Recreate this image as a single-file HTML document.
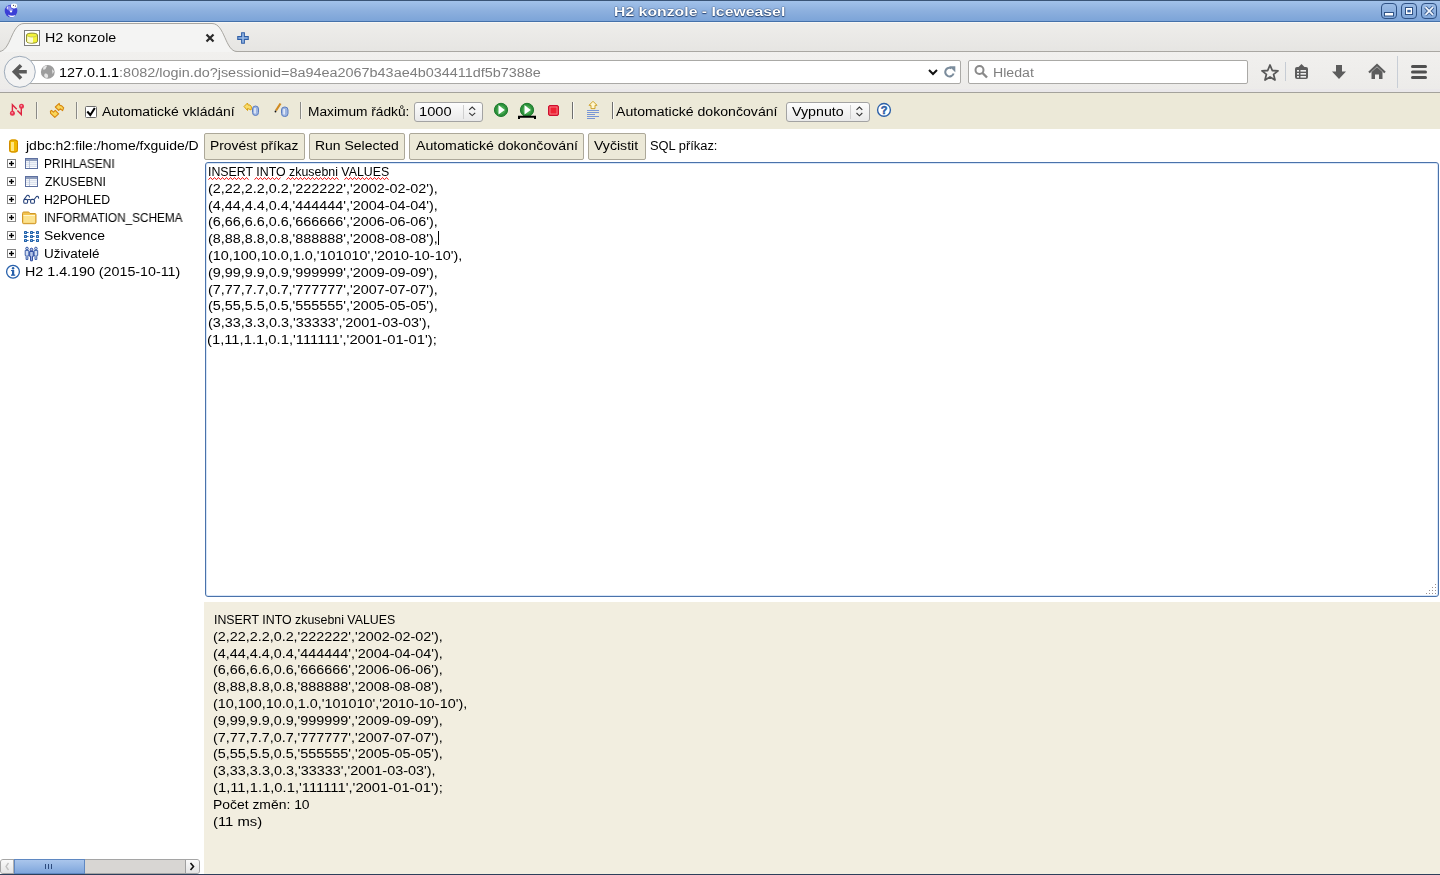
<!DOCTYPE html>
<html><head><meta charset="utf-8"><title>H2 konzole</title>
<style>
*{box-sizing:border-box}
html,body{margin:0;padding:0;width:1440px;height:875px;overflow:hidden;background:#fff;font-family:'Liberation Sans', sans-serif}
.a{position:absolute}
.t{position:absolute;white-space:pre;line-height:20px;transform-origin:0 0;font-family:'Liberation Sans', sans-serif;will-change:transform}
svg{position:absolute;overflow:visible}
</style></head><body>
<!-- TITLE BAR -->
<div class="a" style="left:0;top:0;width:1440px;height:22px;background:linear-gradient(#a2c2ea,#8db0de 50%,#7ca4d8);border-top:1px solid #3a5476;border-bottom:1px solid #4571aa"></div>
<svg style="left:0;top:0" width="24" height="22">
<circle cx="11" cy="11" r="6.3" fill="#3b3fd6"/>
<path d="M7 7 L9.5 5.5 L11 8 L13 9.5 L12 12 L9 11 Z" fill="#8f8ff0"/>
<ellipse cx="14" cy="6" rx="3.2" ry="2.4" fill="#fff"/>
<circle cx="13.5" cy="5.3" r="0.6" fill="#333"/><circle cx="15.5" cy="6" r="0.6" fill="#333"/>
<path d="M6.5 8 L8 6 L7.5 10 Z" fill="#fff"/>
<path d="M8 14.5 C10 16, 13 16, 15.5 15 L14 16.8 C11 17.5, 9 17, 8 14.5Z" fill="#fff"/>
<circle cx="11" cy="11.5" r="1.1" fill="#fff"/>
</svg>
<div class="t" style="left:613.78px;top:2px;font-size:13px;font-weight:bold;color:#fff;transform:scaleX(1.2158);text-shadow:0 0 1px #1d3a66,0 0 1px #1d3a66,0 1px 1px #2b4a7a;">H2 konzole - Iceweasel</div>
<svg style="left:1380px;top:2px" width="60" height="19">
<g fill="none" stroke="#2f5285" stroke-width="1">
<rect x="1.5" y="1.5" width="15" height="15" rx="3.5"/>
<rect x="21.5" y="1.5" width="15" height="15" rx="3.5"/>
<rect x="41.5" y="1.5" width="15" height="15" rx="3.5"/>
</g>
<rect x="4.5" y="10.5" width="9" height="3.5" fill="#fff" stroke="#2f5285" stroke-width="1"/>
<rect x="25.5" y="5.5" width="7" height="7" fill="#fff" stroke="#2f5285" stroke-width="1"/>
<rect x="27.3" y="7.8" width="3.4" height="2.6" fill="#3a64a0"/>
<path d="M45.5 5.2 L53 12.8 M53 5.2 L45.5 12.8" stroke="#2f5285" stroke-width="3.4"/>
<path d="M45.5 5.2 L53 12.8 M53 5.2 L45.5 12.8" stroke="#eef3fb" stroke-width="1.9"/>
</svg>
<!-- TAB STRIP -->
<div class="a" style="left:0;top:22px;width:1440px;height:30px;background:linear-gradient(#eeedeb,#e6e5e2);border-top:1px solid #f7f6f4"></div>
<div class="a" style="left:0;top:51px;width:1440px;height:1px;background:#a9a7a2"></div>
<svg style="left:0;top:0" width="260" height="60">
<path d="M-1 51.5 C 11 51.5, 11 23.5, 24 23.5 L 212 23.5 C 225 23.5, 225 51.5, 237 51.5 L 237 53 L -1 53 Z" fill="#f4f4f3"/>
<path d="M-1 51.5 C 11 51.5, 11 23.5, 24 23.5 L 212 23.5 C 225 23.5, 225 51.5, 237 51.5" fill="none" stroke="#a8a6a1" stroke-width="1"/>
<rect x="24.5" y="30.5" width="15" height="15" fill="#fff" stroke="#7e7e7e"/>
<path d="M26.5 35 C26.5 32.5, 37.5 32.5, 37.5 35 V41.3 C37.5 43.8, 26.5 43.8, 26.5 41.3 Z" fill="#f3f33a" stroke="#8f8f32"/>
<path d="M27.3 36 C29 37.3, 31 37.3, 33 37 V42.6 C31 43, 29 42.8, 27.3 41.8 Z" fill="#fbfbd0"/>
<path d="M27 35.5 C29 37.5, 35 37.5, 37 35.5" fill="none" stroke="#b8b860" stroke-width="0.7"/>
<path d="M206.5 34.5 L213.5 41.5 M213.5 34.5 L206.5 41.5" stroke="#2a2a2a" stroke-width="2.2"/>
<path d="M243 32.2 V43.8 M237.2 38 H248.8" stroke="#2f5ea6" stroke-width="3.8"/>
<path d="M243 33.3 V42.7 M238.3 38 H247.7" stroke="#9bbce8" stroke-width="1.6"/>
</svg>
<div class="t" style="left:44.81px;top:28px;font-size:12px;font-weight:normal;color:#000;transform:scaleX(1.1864);">H2 konzole</div>
<!-- NAV BAR -->
<div class="a" style="left:0;top:52px;width:1440px;height:41px;background:linear-gradient(#f1f0ee,#ecebe9);border-bottom:1px solid #a4a29c"></div>
<div class="a" style="left:0;top:89px;width:1440px;height:3px;background:#eae8ea"></div>
<div class="a" style="left:26px;top:60px;width:935px;height:24px;background:#fff;border:1px solid #aaa9a6;border-radius:2px"></div>
<div class="a" style="left:968px;top:60px;width:280px;height:24px;background:#fff;border:1px solid #aaa9a6;border-radius:2px"></div>
<svg style="left:0;top:52px" width="1440" height="40">
<circle cx="19.8" cy="19.8" r="15.5" fill="#f3f3f3" stroke="#9eabba" stroke-width="1"/>
<path d="M21 13.2 L14.4 19.8 L21 26.4 M15 19.8 H26.8" fill="none" stroke="#5a5a5a" stroke-width="3.6" stroke-linejoin="miter"/>
<circle cx="47.8" cy="19.9" r="6.9" fill="#9d9d9d"/>
<path d="M43 16 C44 14, 46 13.5, 47 14 L45.5 17 L43.5 18 Z" fill="#e6e6e6"/>
<path d="M45 21.5 C 47 21, 48.5 22.5, 48 25.5 L 46 26 C 44 25, 43.5 23, 45 21.5Z" fill="#e6e6e6"/>
<path d="M52 17 L54 19.5 L52.5 22 Z" fill="#e6e6e6"/>
<path d="M929 18 L933 22 L937 18" fill="none" stroke="#111" stroke-width="2"/>
<path d="M953.6 21.5 A 4.3 4.3 0 1 1 951.5 16.3" fill="none" stroke="#7b8c9c" stroke-width="2.1"/>
<path d="M949.2 14.2 L955.3 14.2 L955.3 20.3 Z" fill="#7b8c9c"/>
<circle cx="979.5" cy="18" r="4" fill="none" stroke="#8a8a8a" stroke-width="2"/>
<path d="M982.5 21 L987 25.5" stroke="#8a8a8a" stroke-width="2.4"/>
<path d="M1270 13 L1272.3 18.5 L1278 18.9 L1273.6 22.4 L1275 28 L1270 25 L1265 28 L1266.4 22.4 L1262 18.9 L1267.7 18.5 Z" fill="none" stroke="#575757" stroke-width="1.8" stroke-linejoin="round"/>
<rect x="1285" y="10" width="1" height="19" fill="#c6ccd4"/>
<rect x="1295" y="15" width="13" height="12" rx="2" fill="#5c5c5c"/>
<path d="M1298.5 15 L1301.5 12 L1304.5 15 Z" fill="#5c5c5c"/>
<g fill="#eee"><rect x="1297" y="18" width="2" height="1.6"/><rect x="1300.5" y="18" width="5.5" height="1.6"/><rect x="1297" y="21" width="2" height="1.6"/><rect x="1300.5" y="21" width="5.5" height="1.6"/><rect x="1297" y="24" width="2" height="1.6"/><rect x="1300.5" y="24" width="5.5" height="1.6"/></g>
<path d="M1336 13 H1342 V19.5 H1346 L1339 27 L1332 19.5 H1336 Z" fill="#5c5c5c"/>
<path d="M1369 20.5 L1377 13 L1385 20.5" fill="none" stroke="#5c5c5c" stroke-width="2.2"/>
<path d="M1371.5 20 L1377 15 L1382.5 20 V27 H1379 V22.5 H1375 V27 H1371.5 Z" fill="#5c5c5c"/>
<rect x="1397" y="4" width="1" height="32" fill="#c8ced6"/>
<rect x="1411" y="13" width="16" height="3" rx="1.5" fill="#4f4f4f"/>
<rect x="1411" y="18.5" width="16" height="3" rx="1.5" fill="#4f4f4f"/>
<rect x="1411" y="24" width="16" height="3" rx="1.5" fill="#4f4f4f"/>
</svg>
<div class="t" style="left:58.8px;top:63px;font-size:12px;font-weight:normal;color:#000;transform:scaleX(1.2012);">127.0.1.1<span style="color:#7d7d7d">:8082/login.do?jsessionid=8a94ea2067b43ae4b034411df5b7388e</span></div>
<div class="t" style="left:992.82px;top:63px;font-size:12px;font-weight:normal;color:#7f7f7f;transform:scaleX(1.1765);">Hledat</div>
<!-- H2 TOOLBAR -->
<div class="a" style="left:0;top:93px;width:1440px;height:36px;background:#ece9d8"></div>
<svg style="left:0;top:93px" width="900" height="36">
<g fill="none" stroke="#de2440" stroke-width="1.4">
<path d="M12.4 19 V11.8 L16.8 16.2"/><path d="M17.4 17.6 L21.3 21.5 V14"/></g>
<circle cx="12.4" cy="20.3" r="2.5" fill="#e83450"/><circle cx="21.5" cy="13.3" r="2.5" fill="#e83450"/>
<circle cx="12.2" cy="19.8" r="0.9" fill="#f5a0ac"/><circle cx="21.3" cy="12.8" r="0.9" fill="#f5a0ac"/>
<rect x="36" y="9" width="1" height="17" fill="#8a8a86"/><rect x="37" y="9" width="1" height="17" fill="#fff" opacity=".5"/>
<path d="M59.2 10.4 L55.3 14.0 L58.7 17.3 L60.2 15.8 L62.6 17.6 L63.7 14.9 L61.7 12.8 L59.9 12.4 Z" fill="#f9d65a" stroke="#d7860e" stroke-width="1.1" stroke-linejoin="round"/>
<path d="M50.4 18.2 L51.5 17.4 L53.5 19.2 L55.3 17.4 L58.6 20.8 L54.8 24.3 L50.6 20.3 Z" fill="#f9d65a" stroke="#d7860e" stroke-width="1.1" stroke-linejoin="round"/>
<rect x="76" y="9" width="1" height="17" fill="#8a8a86"/><rect x="77" y="9" width="1" height="17" fill="#fff" opacity=".5"/>
<rect x="85.5" y="13.5" width="11" height="11" rx="1" fill="#fff" stroke="#6a6a6a"/>
<path d="M87.3 18.5 L90.3 22 L94.8 15" fill="none" stroke="#000" stroke-width="2"/>
<path d="M244 13.5 L247.5 10 L248 12 L250 12 L251.5 14 L251 17 L249 16 L247.5 15.5 L247.5 17.5 Z" fill="#f9dc6a" stroke="#d9a010" stroke-width="1"/>
<rect x="252.5" y="13" width="6" height="9.5" rx="3" fill="#9db5e0" stroke="#5a7cc0"/>
<rect x="254.2" y="15" width="1.6" height="5.5" fill="#e8eefb"/>
<path d="M276 17.5 L280.5 10.5" stroke="#d08a20" stroke-width="2.2"/>
<circle cx="275.5" cy="18.5" r="0.9" fill="#111"/>
<rect x="281.5" y="14" width="6.5" height="9.5" rx="3" fill="#9db5e0" stroke="#5a7cc0"/>
<rect x="283.3" y="16" width="1.6" height="5.5" fill="#e8eefb"/>
<rect x="300" y="9" width="1" height="17" fill="#8a8a86"/><rect x="301" y="9" width="1" height="17" fill="#fff" opacity=".5"/>
<circle cx="501" cy="16.9" r="6.6" fill="#2b8f3a" stroke="#1d7b2c" stroke-width="1"/>
<circle cx="501" cy="16.9" r="4.5" fill="#45a84f"/>
<path d="M498.5 12 L504.8 16.9 L498.5 21.6 Z" fill="#fff"/>
<circle cx="527" cy="16.9" r="6.6" fill="#2b8f3a" stroke="#1d7b2c" stroke-width="1"/>
<circle cx="527" cy="16.9" r="4.5" fill="#45a84f"/>
<path d="M524.5 12 L530.8 16.9 L524.5 21.6 Z" fill="#fff"/>
<path d="M519 26 V23.8 H535 V26" fill="none" stroke="#000" stroke-width="2"/>
<rect x="548.5" y="12.5" width="10" height="10" rx="1.5" fill="#ee2233" stroke="#cc1030"/>
<rect x="550" y="14" width="7" height="7" fill="none" stroke="#f48a94" stroke-width="0.8"/>
<rect x="572" y="9" width="1" height="17" fill="#6e6e6e"/><rect x="573" y="9" width="1" height="17" fill="#fff" opacity=".8"/>
<path d="M593 8.3 L597 12.3 H595 V15.6 H591 V12.3 H589 Z" fill="#fff6d0" stroke="#c8960e" stroke-width="0.85" stroke-linejoin="round"/>
<g fill="#7896d6"><rect x="587" y="17" width="12" height="1"/><rect x="587" y="19" width="12" height="1"/><rect x="587" y="21" width="8" height="1"/><rect x="587" y="23" width="12" height="1"/><rect x="587" y="25" width="8" height="1"/></g>
<rect x="612" y="9" width="1" height="17" fill="#6e6e6e"/><rect x="613" y="9" width="1" height="17" fill="#fff" opacity=".8"/>
<circle cx="884" cy="16.9" r="6.4" fill="#fff" stroke="#2b60a8" stroke-width="1.4"/>
<text x="884" y="20.9" text-anchor="middle" font-family="Liberation Sans" font-weight="bold" font-size="11" fill="#2b60a8" stroke="#2b60a8" stroke-width="0.5">?</text>
</svg>
<div class="t" style="left:101.5px;top:102px;font-size:12px;font-weight:normal;color:#000;transform:scaleX(1.1623);">Automatické vkládání</div>
<div class="t" style="left:307.86px;top:102px;font-size:12px;font-weight:normal;color:#000;transform:scaleX(1.1437);">Maximum řádků:</div>
<div class="t" style="left:616.0px;top:102px;font-size:12px;font-weight:normal;color:#000;transform:scaleX(1.1752);">Automatické dokončování</div>
<div class="a" style="left:414px;top:102px;width:69px;height:20px;border:1px solid #a3a3a3;border-radius:3px;background:linear-gradient(#fdfdfd,#e9e9e9)"></div>
<div class="a" style="left:786px;top:102px;width:84px;height:20px;border:1px solid #a3a3a3;border-radius:3px;background:linear-gradient(#fdfdfd,#e9e9e9)"></div>
<svg style="left:0;top:93px" width="900" height="36">
<path d="M463.5 12 V26" stroke="#cfcfcf"/>
<path d="M469.2 16.8 L472.2 14 L475.2 16.8 M469.2 19.8 L472.2 22.6 L475.2 19.8" fill="none" stroke="#333" stroke-width="1.1"/>
<path d="M850.5 12 V26" stroke="#cfcfcf"/>
<path d="M856.5 16.8 L859.4 14 L862.3 16.8 M856.5 20 L859.4 22.8 L862.3 20" fill="none" stroke="#333" stroke-width="1.1"/>
</svg>
<div class="t" style="left:419.28px;top:102px;font-size:12px;font-weight:normal;color:#000;transform:scaleX(1.22);">1000</div>
<div class="t" style="left:791.5px;top:102px;font-size:12px;font-weight:normal;color:#000;transform:scaleX(1.186);">Vypnuto</div>
<!-- LEFT TREE -->
<div class="a" style="left:0;top:129px;width:200px;height:745px;overflow:hidden">
<svg style="left:0;top:-129px" width="200" height="300">
<rect x="9" y="139.5" width="9" height="13" rx="2.5" fill="#f0b800"/>
<rect x="9.5" y="140" width="8" height="12" rx="2.5" fill="none" stroke="#d08a00"/>
<rect x="11" y="142" width="3" height="9" fill="#ffe680"/>
<g fill="#fff" stroke="#858585"><rect x="7.5" y="159.5" width="8" height="8"/><rect x="7.5" y="177.5" width="8" height="8"/><rect x="7.5" y="195.5" width="8" height="8"/><rect x="7.5" y="213.5" width="8" height="8"/><rect x="7.5" y="231.5" width="8" height="8"/><rect x="7.5" y="249.5" width="8" height="8"/></g><g fill="#000"><rect x="9" y="162.8" width="5" height="1.4"/><rect x="10.8" y="161.0" width="1.4" height="5"/><rect x="9" y="180.8" width="5" height="1.4"/><rect x="10.8" y="179.0" width="1.4" height="5"/><rect x="9" y="198.8" width="5" height="1.4"/><rect x="10.8" y="197.0" width="1.4" height="5"/><rect x="9" y="216.8" width="5" height="1.4"/><rect x="10.8" y="215.0" width="1.4" height="5"/><rect x="9" y="234.8" width="5" height="1.4"/><rect x="10.8" y="233.0" width="1.4" height="5"/><rect x="9" y="252.8" width="5" height="1.4"/><rect x="10.8" y="251.0" width="1.4" height="5"/></g>
<g id="tbl">
<rect x="25" y="158" width="13" height="11" fill="#5d70a0"/>
<rect x="26" y="159" width="11" height="2" fill="#8d9cbc"/>
<rect x="26" y="161" width="11" height="7" fill="#b8c4dc"/>
<g fill="#fff"><rect x="26" y="161.2" width="3" height="1.3"/><rect x="30" y="161.2" width="7" height="1.3"/><rect x="26" y="163.2" width="3" height="1.3"/><rect x="30" y="163.2" width="7" height="1.3"/><rect x="26" y="165.2" width="3" height="1.3"/><rect x="30" y="165.2" width="7" height="1.3"/><rect x="26" y="167" width="3" height="1"/><rect x="30" y="167" width="7" height="1"/></g>
</g>
<use href="#tbl" y="18"/>
<g fill="none" stroke="#233f78" stroke-width="1.1" stroke-linejoin="round">
<rect x="23.7" y="199.4" width="3.9" height="3.9" rx="1.4"/><rect x="30.6" y="199.4" width="3.9" height="3.9" rx="1.4"/>
<path d="M27.6 199.6 H30.6"/><path d="M24 199.5 L27 195.5 C28 194.8, 29.5 195.5, 29.5 197.5"/><path d="M34.2 199.5 L36.5 196.5 C37.5 195.8, 38.7 196.5, 38.6 198.6"/>
</g>
<path d="M22.5 213.5 C22.5 212.5, 23 212, 24 212 H28.5 C29.3 212, 29.5 212.8, 30 213.5 H35 C35.7 213.5, 36 214, 36 214.7 V222.5 C36 223.3, 35.5 223.7, 34.8 223.7 H23.7 C23 223.7, 22.5 223.3, 22.5 222.5 Z" fill="#f2c24e" stroke="#cf9628"/>
<rect x="23.5" y="215" width="11.5" height="7.8" fill="#fbe28e"/>
<rect x="23.5" y="215" width="11.5" height="1" fill="#fff6cf"/>
<g fill="#1f5fa8"><rect x="24" y="231" width="3" height="3" rx="0.4"/><rect x="24" y="235" width="3" height="3" rx="0.4"/><rect x="24" y="239" width="3" height="3" rx="0.4"/><rect x="30" y="231" width="3" height="3" rx="0.4"/><rect x="30" y="235" width="3" height="3" rx="0.4"/><rect x="30" y="239" width="3" height="3" rx="0.4"/><rect x="36" y="231" width="3" height="3" rx="0.4"/><rect x="36" y="235" width="3" height="3" rx="0.4"/><rect x="36" y="239" width="3" height="3" rx="0.4"/></g>
<g fill="#8cbce8"><rect x="25" y="232" width="1" height="1"/><rect x="25" y="236" width="1" height="1"/><rect x="25" y="240" width="1" height="1"/><rect x="31" y="232" width="1" height="1"/><rect x="31" y="236" width="1" height="1"/><rect x="31" y="240" width="1" height="1"/><rect x="37" y="232" width="1" height="1"/><rect x="37" y="236" width="1" height="1"/><rect x="37" y="240" width="1" height="1"/></g>
<g fill="#2a68b0"><rect x="27" y="232.0" width="1.6" height="1"/><rect x="27" y="236.0" width="1.6" height="1"/><rect x="27" y="240.0" width="1.6" height="1"/><rect x="33" y="232.0" width="1.6" height="1"/><rect x="33" y="236.0" width="1.6" height="1"/><rect x="33" y="240.0" width="1.6" height="1"/></g>
<circle cx="27.0" cy="248.5" r="1.3" fill="#d0dcf2" stroke="#3c5ea8" stroke-width="1"/><path d="M25.2 250.4 H28.8 V255.4 H27.9 V259.5 H26.1 V255.4 H25.2 V250.4 Z" fill="#d0dcf2" stroke="#3c5ea8" stroke-width="1" stroke-linejoin="round"/><circle cx="35.9" cy="248.5" r="1.3" fill="#d0dcf2" stroke="#3c5ea8" stroke-width="1"/><path d="M34.1 250.4 H37.7 V255.4 H36.8 V259.5 H35.0 V255.4 H34.1 V250.4 Z" fill="#d0dcf2" stroke="#3c5ea8" stroke-width="1" stroke-linejoin="round"/><circle cx="31.5" cy="249.5" r="1.3" fill="#b8c8ea" stroke="#22409a" stroke-width="1"/><path d="M29.7 251.4 H33.3 V256.4 H32.4 V260.8 H30.6 V256.4 H29.7 V251.4 Z" fill="#b8c8ea" stroke="#22409a" stroke-width="1" stroke-linejoin="round"/>
<circle cx="13" cy="271.8" r="6.4" fill="#fff" stroke="#2760ab" stroke-width="1.3"/>
<rect x="12" y="270" width="2.2" height="5" fill="#2760ab"/><rect x="11" y="274.5" width="4.2" height="1.3" fill="#2760ab"/><rect x="11" y="270" width="2" height="1.1" fill="#2760ab"/>
<circle cx="13.1" cy="268.2" r="1.2" fill="#2760ab"/>
</svg>
<div class="a" style="left:0;top:-129px;width:200px;height:875px">
<div class="t" style="left:26.4px;top:136px;font-size:12px;font-weight:normal;color:#000;transform:scaleX(1.1662);">jdbc:h2:file:/home/fxguide/D</div>
<div class="t" style="left:43.81px;top:154px;font-size:12px;font-weight:normal;color:#000;transform:scaleX(0.9913);">PRIHLASENI</div>
<div class="t" style="left:44.8px;top:172px;font-size:12px;font-weight:normal;color:#000;transform:scaleX(1.0136);">ZKUSEBNI</div>
<div class="t" style="left:43.78px;top:190px;font-size:12px;font-weight:normal;color:#000;transform:scaleX(1.0222);">H2POHLED</div>
<div class="t" style="left:43.82px;top:208px;font-size:12px;font-weight:normal;color:#000;transform:scaleX(0.9821);">INFORMATION_SCHEMA</div>
<div class="t" style="left:43.64px;top:226px;font-size:12px;font-weight:normal;color:#000;transform:scaleX(1.1569);">Sekvence</div>
<div class="t" style="left:43.67px;top:244px;font-size:12px;font-weight:normal;color:#000;transform:scaleX(1.125);">Uživatelé</div>
<div class="t" style="left:25.31px;top:262px;font-size:12px;font-weight:normal;color:#000;transform:scaleX(1.1899);">H2 1.4.190 (2015-10-11)</div>
</div></div>
<!-- scrollbar -->
<div class="a" style="left:0;top:859px;width:200px;height:15px;background:#d8d6d3;border:1px solid #a5a5a5;border-radius:3px"></div>
<div class="a" style="left:1px;top:860px;width:13px;height:13px;background:linear-gradient(#fafafa,#e4e4e4);border-right:1px solid #b0b0b0;border-radius:2px 0 0 2px"></div>
<div class="a" style="left:14px;top:859px;width:71px;height:15px;background:linear-gradient(#aac6ec,#7fa6dc);border:1px solid #5f88c2"></div>
<div class="a" style="left:185px;top:860px;width:14px;height:13px;background:linear-gradient(#fafafa,#e4e4e4);border-left:1px solid #a0a0a0;border-radius:0 2px 2px 0"></div>
<svg style="left:0;top:859px" width="200" height="15">
<path d="M8.5 4 L6 7.5 L8.5 11" fill="none" stroke="#c0c0c0" stroke-width="1.3"/>
<path d="M190.5 4 L193.5 7.5 L190.5 11" fill="none" stroke="#111" stroke-width="1.6"/>
<g fill="#2c4a7c"><rect x="45" y="5" width="1" height="5"/><rect x="48" y="5" width="1" height="5"/><rect x="51" y="5" width="1" height="5"/></g>
</svg>
<!-- BUTTONS -->
<div class="a" style="left:204px;top:133px;width:101px;height:27px;border:1px solid #aca899;border-radius:2px;background:#ece9d8"></div>
<div class="a" style="left:309px;top:133px;width:96px;height:27px;border:1px solid #aca899;border-radius:2px;background:#ece9d8"></div>
<div class="a" style="left:409px;top:133px;width:175px;height:27px;border:1px solid #aca899;border-radius:2px;background:#ece9d8"></div>
<div class="a" style="left:588px;top:133px;width:58px;height:27px;border:1px solid #aca899;border-radius:2px;background:#ece9d8"></div>
<div class="t" style="left:210.35px;top:136px;font-size:12px;font-weight:normal;color:#000;transform:scaleX(1.1533);">Provést příkaz</div>
<div class="t" style="left:314.84px;top:136px;font-size:12px;font-weight:normal;color:#000;transform:scaleX(1.1643);">Run Selected</div>
<div class="t" style="left:416.0px;top:136px;font-size:12px;font-weight:normal;color:#000;transform:scaleX(1.1788);">Automatické dokončování</div>
<div class="t" style="left:594.0px;top:136px;font-size:12px;font-weight:normal;color:#000;transform:scaleX(1.1737);">Vyčistit</div>
<div class="t" style="left:649.53px;top:136px;font-size:12px;font-weight:normal;color:#000;transform:scaleX(1.0721);">SQL příkaz:</div>
<!-- TEXTAREA -->
<div class="a" style="left:205px;top:162px;width:1234px;height:435px;border:1px solid #4a72aa;border-radius:3px;background:#fff;box-shadow:inset 0 0 0 1px #d8e6f8"></div>
<svg style="left:200px;top:160px" width="1240" height="440">
<path d="M8.5 19.7L10.5 17.5L12.5 19.7L14.5 17.5L16.5 19.7L18.5 17.5L20.5 19.7L22.5 17.5L24.5 19.7L26.5 17.5L28.5 19.7L30.5 17.5L32.5 19.7L34.5 17.5L36.5 19.7L38.5 17.5L40.5 19.7L42.5 17.5L44.5 19.7L46.5 17.5L48.5 19.7" fill="none" stroke="#f01010" stroke-width="1"/><path d="M54.5 19.7L56.5 17.5L58.5 19.7L60.5 17.5L62.5 19.7L64.5 17.5L66.5 19.7L68.5 17.5L70.5 19.7L72.5 17.5L74.5 19.7L76.5 17.5L78.5 19.7L80.5 17.5" fill="none" stroke="#f01010" stroke-width="1"/><path d="M86.5 19.7L88.5 17.5L90.5 19.7L92.5 17.5L94.5 19.7L96.5 17.5L98.5 19.7L100.5 17.5L102.5 19.7L104.5 17.5L106.5 19.7L108.5 17.5L110.5 19.7L112.5 17.5L114.5 19.7L116.5 17.5L118.5 19.7L120.5 17.5L122.5 19.7L124.5 17.5L126.5 19.7L128.5 17.5L130.5 19.7L132.5 17.5L134.5 19.7L136.5 17.5L138.5 19.7" fill="none" stroke="#f01010" stroke-width="1"/><path d="M144.5 19.7L146.5 17.5L148.5 19.7L150.5 17.5L152.5 19.7L154.5 17.5L156.5 19.7L158.5 17.5L160.5 19.7L162.5 17.5L164.5 19.7L166.5 17.5L168.5 19.7L170.5 17.5L172.5 19.7L174.5 17.5L176.5 19.7L178.5 17.5L180.5 19.7L182.5 17.5L184.5 19.7L186.5 17.5L188.5 19.7" fill="none" stroke="#f01010" stroke-width="1"/>
<rect x="238" y="71" width="1" height="14" fill="#000"/>
<g fill="#9a9090"><rect x="1235" y="424" width="1" height="1"/><rect x="1232" y="427" width="1" height="1"/><rect x="1235" y="427" width="1" height="1"/><rect x="1229" y="430" width="1" height="1"/><rect x="1232" y="430" width="1" height="1"/><rect x="1235" y="430" width="1" height="1"/><rect x="1226" y="433" width="1" height="1"/><rect x="1229" y="433" width="1" height="1"/><rect x="1232" y="433" width="1" height="1"/><rect x="1235" y="433" width="1" height="1"/></g>
</svg>
<div class="t" style="left:207.67px;top:162px;font-size:12px;font-weight:normal;color:#000;transform:scaleX(1.0305);">INSERT INTO zkusebni VALUES</div>
<div class="t" style="left:207.5px;top:179px;font-size:12px;font-weight:normal;color:#000;transform:scaleX(1.1963);">(2,22,2.2,0.2,&#39;222222&#39;,&#39;2002-02-02&#39;),</div>
<div class="t" style="left:207.5px;top:196px;font-size:12px;font-weight:normal;color:#000;transform:scaleX(1.1963);">(4,44,4.4,0.4,&#39;444444&#39;,&#39;2004-04-04&#39;),</div>
<div class="t" style="left:207.5px;top:212px;font-size:12px;font-weight:normal;color:#000;transform:scaleX(1.1963);">(6,66,6.6,0.6,&#39;666666&#39;,&#39;2006-06-06&#39;),</div>
<div class="t" style="left:207.5px;top:229px;font-size:12px;font-weight:normal;color:#000;transform:scaleX(1.1963);">(8,88,8.8,0.8,&#39;888888&#39;,&#39;2008-08-08&#39;),</div>
<div class="t" style="left:207.5px;top:246px;font-size:12px;font-weight:normal;color:#000;transform:scaleX(1.199);">(10,100,10.0,1.0,&#39;101010&#39;,&#39;2010-10-10&#39;),</div>
<div class="t" style="left:207.5px;top:263px;font-size:12px;font-weight:normal;color:#000;transform:scaleX(1.1963);">(9,99,9.9,0.9,&#39;999999&#39;,&#39;2009-09-09&#39;),</div>
<div class="t" style="left:207.5px;top:280px;font-size:12px;font-weight:normal;color:#000;transform:scaleX(1.1963);">(7,77,7.7,0.7,&#39;777777&#39;,&#39;2007-07-07&#39;),</div>
<div class="t" style="left:207.5px;top:296px;font-size:12px;font-weight:normal;color:#000;transform:scaleX(1.1963);">(5,55,5.5,0.5,&#39;555555&#39;,&#39;2005-05-05&#39;),</div>
<div class="t" style="left:207.5px;top:313px;font-size:12px;font-weight:normal;color:#000;transform:scaleX(1.2011);">(3,33,3.3,0.3,&#39;33333&#39;,&#39;2001-03-03&#39;),</div>
<div class="t" style="left:207.47px;top:330px;font-size:12px;font-weight:normal;color:#000;transform:scaleX(1.2314);">(1,11,1.1,0.1,&#39;111111&#39;,&#39;2001-01-01&#39;);</div>
<!-- RESULT -->
<div class="a" style="left:204px;top:602px;width:1236px;height:272px;background:#f2eee0"></div>
<div class="t" style="left:213.57px;top:610px;font-size:12px;font-weight:normal;color:#000;transform:scaleX(1.0305);">INSERT INTO zkusebni VALUES</div>
<div class="t" style="left:213.4px;top:627px;font-size:12px;font-weight:normal;color:#000;transform:scaleX(1.1963);">(2,22,2.2,0.2,&#39;222222&#39;,&#39;2002-02-02&#39;),</div>
<div class="t" style="left:213.4px;top:644px;font-size:12px;font-weight:normal;color:#000;transform:scaleX(1.1963);">(4,44,4.4,0.4,&#39;444444&#39;,&#39;2004-04-04&#39;),</div>
<div class="t" style="left:213.4px;top:660px;font-size:12px;font-weight:normal;color:#000;transform:scaleX(1.1963);">(6,66,6.6,0.6,&#39;666666&#39;,&#39;2006-06-06&#39;),</div>
<div class="t" style="left:213.4px;top:677px;font-size:12px;font-weight:normal;color:#000;transform:scaleX(1.1963);">(8,88,8.8,0.8,&#39;888888&#39;,&#39;2008-08-08&#39;),</div>
<div class="t" style="left:213.4px;top:694px;font-size:12px;font-weight:normal;color:#000;transform:scaleX(1.199);">(10,100,10.0,1.0,&#39;101010&#39;,&#39;2010-10-10&#39;),</div>
<div class="t" style="left:213.4px;top:711px;font-size:12px;font-weight:normal;color:#000;transform:scaleX(1.1963);">(9,99,9.9,0.9,&#39;999999&#39;,&#39;2009-09-09&#39;),</div>
<div class="t" style="left:213.4px;top:728px;font-size:12px;font-weight:normal;color:#000;transform:scaleX(1.1963);">(7,77,7.7,0.7,&#39;777777&#39;,&#39;2007-07-07&#39;),</div>
<div class="t" style="left:213.4px;top:744px;font-size:12px;font-weight:normal;color:#000;transform:scaleX(1.1963);">(5,55,5.5,0.5,&#39;555555&#39;,&#39;2005-05-05&#39;),</div>
<div class="t" style="left:213.4px;top:761px;font-size:12px;font-weight:normal;color:#000;transform:scaleX(1.2011);">(3,33,3.3,0.3,&#39;33333&#39;,&#39;2001-03-03&#39;),</div>
<div class="t" style="left:213.37px;top:778px;font-size:12px;font-weight:normal;color:#000;transform:scaleX(1.2314);">(1,11,1.1,0.1,&#39;111111&#39;,&#39;2001-01-01&#39;);</div>
<div class="t" style="left:213.44px;top:795px;font-size:12px;font-weight:normal;color:#000;transform:scaleX(1.1585);">Počet změn: 10</div>
<div class="t" style="left:213.36px;top:812px;font-size:12px;font-weight:normal;color:#000;transform:scaleX(1.2368);">(11 ms)</div>
<div class="a" style="left:0;top:874px;width:1440px;height:1px;background:#2d3f5b"></div>

</body></html>
